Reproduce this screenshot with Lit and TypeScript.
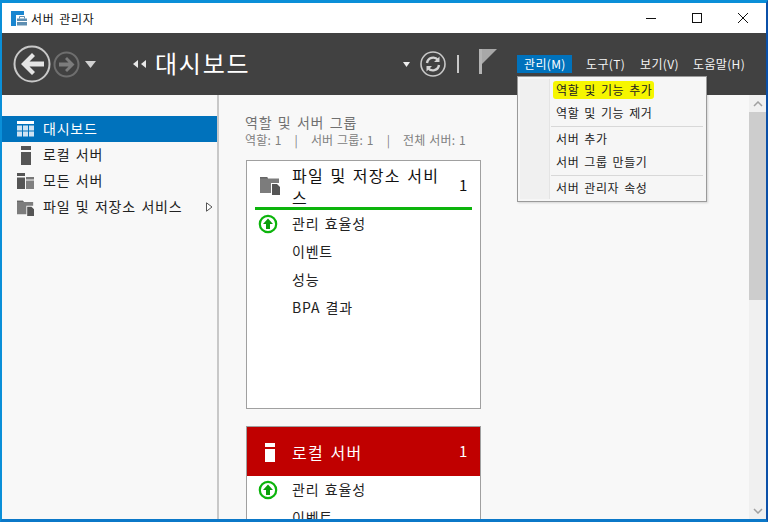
import { LitElement, html, css, svg } from "lit";
import { customElement } from "lit/decorators.js";

const serverIcon = (c: string) => svg`<svg width="10" height="19" viewBox="0 0 10 19"><rect x="0" y="0" width="10" height="4" fill="${c}"/><rect x="0" y="6" width="10" height="13" fill="${c}"/></svg>`;
const upIcon = html`<svg class="up" width="20" height="20" viewBox="0 0 20 20"><circle cx="10" cy="10" r="8.2" fill="#fff" stroke="#0cb40c" stroke-width="2.2"/><path d="M10 4.5 L15 10 H12 V15 H8 V10 H5 Z" fill="#0a9e0a"/></svg>`;
const folderIcon = (s: number) => html`<svg width="${s}" height="${s}" viewBox="0 0 20 20"><path d="M0 2 H7 L8 3.5 H19 V8 H11 V18 H0 Z" fill="#7c7c7c"/><path d="M0 2 H7 L8 3.5 H0 Z" fill="#666"/><path d="M12 9 H17 L20 12 V20 H12 Z" fill="#555"/></svg>`;

@customElement("app-root")
export class AppRoot extends LitElement {
  static styles = css`
    :host { display: block; width: 768px; height: 522px; overflow: hidden; box-sizing: border-box;
      font-family: "Noto Sans CJK KR", "Noto Sans", sans-serif; position: relative;
      border-top: 3px solid #0a8fd8; border-left: 2px solid #0a8fd8; border-right: 2px solid #0b50a8; border-bottom: 3px solid #0b78c8; background: #f8f8f8; }
    * { box-sizing: border-box; }
    .win { display: flex; flex-direction: column; height: 100%; }
    .title { height: 30px; flex: none; background: #fff; display: flex; align-items: center; padding-left: 9px; font-size: 12px; color: #111; gap: 4px; letter-spacing: .7px; word-spacing: 1.5px; }
    .title .caps { margin-left: auto; display: flex; }
    .cap { width: 46px; height: 30px; display: flex; align-items: center; justify-content: center; }
    .head { height: 62px; flex: none; background: #414141; display: flex; align-items: center; position: relative; color: #fff; }
    .nav { display: flex; align-items: center; padding-left: 11px; width: 131px; flex: none; }
    .crumb { display: flex; align-items: center; gap: 9px; flex: none; width: 270px; }
    .crumb span { font-size: 24px; line-height: 30px; color: #fff; margin-top: -3px; letter-spacing: 1.75px; }
    .tools { display: flex; align-items: center; flex: none; width: 114px; }
    .menus { display: flex; align-items: center; font-size: 12px; color: #f4f4f4; letter-spacing: .35px; }
    .menus div { height: 18px; line-height: 18px; padding: 0 7px; white-space: nowrap; margin-right: 0; }
    .menus .on { background: #0072bc; color: #fff; width: 55px; margin-right: 7px; }
    .menus .m2 { width: 54px; }
    .menus .m3 { width: 53px; }
    .body { flex: 1; display: flex; min-height: 0; background: #f8f8f8; }
    .side { width: 217px; flex: none; border-right: 2px solid #c8c8c8; padding-top: 21px; background: #f8f8f8; }
    .item { height: 26px; display: flex; align-items: center; font-size: 14px; letter-spacing: .8px; word-spacing: 1.5px; color: #222; position: relative; white-space: nowrap; }
    .item .lbl { margin-top: -2px; }
    .item .ic { width: 41px; display: flex; justify-content: center; padding-left: 6px; flex: none; }
    .item.sel { background: #0072bc; color: #fff; }
    .arrow { position: absolute; left: 204px; top: 8px; }
    .main { flex: 1; padding: 18px 0 0 26px; overflow: hidden; min-width: 0; }
    .h1 { font-size: 14px; line-height: 18px; color: #707070; letter-spacing: .8px; word-spacing: 1.5px; }
    .h2 { font-size: 12px; line-height: 16px; color: #808080; margin-top: 1px; display: flex; gap: 13px; letter-spacing: .15px; white-space: nowrap; word-spacing: 1px; }
    .card { width: 235px; border: 1px solid #a0a0a0; background: #fff; margin: 12px 0 0 1px; height: 249px; flex: none; }
    .card + .card { margin-top: 17px; height: 200px; }
    .chead { height: 49px; display: flex; position: relative; padding-left: 45px; font-size: 16px; line-height: 22px; color: #111; align-items: center; letter-spacing: 1.3px; word-spacing: 1.5px; }
    .chead .t { width: 156px; }
    .chead .n { position: absolute; left: 212px; top: 13px; font-size: 15px; line-height: 22px; }
    .chead .i { position: absolute; left: 13px; top: 14px; }
    .chead .line { position: absolute; left: 8px; right: 8px; bottom: 0; height: 3px; background: #0cb40c; }
    .chead.red { background: #c00000; color: #fff; }
    .chead.red .i { left: 18px; top: 16px; }
    .row { height: 28px; display: flex; align-items: center; font-size: 14px; letter-spacing: .8px; word-spacing: 1.5px; color: #222; padding-left: 45px; position: relative; }
    .row .lbl { margin-top: -2px; }
    .row .up { position: absolute; left: 11px; top: 4px; }
    .sb { width: 17px; flex: none; background: #f0f0f0; display: flex; flex-direction: column; }
    .sb .btn { height: 17px; display: flex; align-items: center; justify-content: center; flex: none; }
    .sb .thumb { height: 188px; background: #cdcdcd; flex: none; }
    .sb .rest { flex: 1; }
    .menu { position: absolute; left: 515px; top: 73px; width: 190px; height: 126px; background: #f6f6f6; border: 1px solid #9a9a9a; padding-top: 2px; font-size: 12px; color: #222; box-shadow: 1px 1px 2px rgba(0,0,0,.15); letter-spacing: .6px; word-spacing: 1.7px; }
    .menu::before { content: ""; position: absolute; left: 2px; top: 2px; bottom: 2px; width: 29px; background: #f0f0f0; border-right: 1px solid #e4e4e4; }
    .mi { position: relative; height: 22.5px; line-height: 22px; padding-left: 38px; white-space: nowrap; }
    .mi mark { display: inline-block; height: 18px; line-height: 18px; vertical-align: top; margin: 2px 0 0 -3px; background: #f6f600; color: #222; padding: 0 2px 0 3px; border-radius: 3px; }
    .sep { position: relative; height: 1px; background: #d8d8d8; margin: 2px 3px 1px 33px; }
  `;

  render() {
    return html`<div class="win">
      <div class="title">
        <svg width="16" height="15" viewBox="0 0 16 15"><rect x="0" y="0" width="5" height="15" fill="#1a86d0"/><rect x="0" y="0" width="13" height="4" fill="#1a86d0"/><rect x="6" y="7.5" width="10" height="7" fill="#5f8fb2"/><path d="M8.5 7.5 V5.5 H13.5 V7.5" fill="none" stroke="#5f8fb2"/><rect x="6" y="10" width="10" height="1" fill="#fff"/></svg>
        <span>서버 관리자</span>
        <div class="caps">
          <div class="cap"><svg width="12" height="12" viewBox="0 0 12 12"><path d="M1 6.5 H11" stroke="#111"/></svg></div>
          <div class="cap"><svg width="12" height="12" viewBox="0 0 12 12"><rect x="1.5" y="1.5" width="9" height="9" fill="none" stroke="#111"/></svg></div>
          <div class="cap"><svg width="12" height="12" viewBox="0 0 12 12"><path d="M1 1 L11 11 M11 1 L1 11" stroke="#111"/></svg></div>
        </div>
      </div>
      <div class="head">
        <div class="nav">
          <svg width="38" height="38" viewBox="0 0 38 38"><circle cx="19" cy="19" r="17.5" fill="none" stroke="#c8c8c8" stroke-width="2"/><path d="M19 8 L8 19 L19 30 L22 27 L16.5 21.5 H31 V16.5 H16.5 L22 11 Z" fill="#e4e4e4"/></svg>
          <svg style="margin-left:2px" width="27" height="27" viewBox="0 0 27 27"><circle cx="13.5" cy="13.5" r="12" fill="none" stroke="#6e6e6e" stroke-width="2"/><path d="M14 6 L21.5 13.5 L14 21 L12 19 L15.5 15.5 H6 V11.5 H15.5 L12 8 Z" fill="#7c7c7c"/></svg>
          <svg style="margin-left:5px" width="11" height="7" viewBox="0 0 11 7"><path d="M0 0 H11 L5.5 7 Z" fill="#d0d0d0"/></svg>
        </div>
        <div class="crumb">
          <svg width="13" height="8" viewBox="0 0 13 8"><path d="M5 0 V8 L0 4 Z M13 0 V8 L8 4 Z" fill="#e8e8e8"/></svg>
          <span>대시보드</span>
        </div>
        <div class="tools">
          <svg width="7" height="5" viewBox="0 0 7 5"><path d="M0 0 H7 L3.5 5 Z" fill="#eee"/></svg>
          <svg style="margin-left:10px" width="26" height="26" viewBox="0 0 26 26"><circle cx="13" cy="13" r="12" fill="none" stroke="#c8c8c8" stroke-width="1.6"/><path d="M7 12 A6.2 6.2 0 0 1 18 9 M19 14 A6.2 6.2 0 0 1 8 17" fill="none" stroke="#d4d4d4" stroke-width="2.4"/><path d="M19.5 5.5 V11 H14 Z M6.5 20.5 V15 H12 Z" fill="#d4d4d4"/></svg>
          <svg style="margin-left:11px" width="2" height="18" viewBox="0 0 2 18"><rect width="2" height="18" fill="#c8c8c8"/></svg>
          <svg style="margin-left:20px;margin-top:-6px" width="18" height="25" viewBox="0 0 18 25"><path d="M0 0 H3 V25 H0 Z" fill="#b4b4b4"/><path d="M3 0 H18 L3 15 Z" fill="#a8a8a8"/></svg>
        </div>
        <div class="menus">
          <div class="on">관리(M)</div><div class="m2">도구(T)</div><div class="m3">보기(V)</div><div>도움말(H)</div>
        </div>
      </div>
      <div class="body">
        <div class="side">
          <div class="item sel"><span class="ic"><svg width="17" height="16" viewBox="0 0 17 16"><rect width="17" height="3" fill="#fff"/><path d="M0 4.5 H5 V9.5 H0 Z M6 4.5 H11 V9.5 H6 Z M12 4.5 H17 V9.5 H12 Z M0 10.5 H5 V15.5 H0 Z M6 10.5 H11 V15.5 H6 Z M12 10.5 H17 V15.5 H12 Z" fill="#cfe3f2"/></svg></span><span class="lbl">대시보드</span></div>
          <div class="item"><span class="ic">${serverIcon("#555")}</span><span class="lbl">로컬 서버</span></div>
          <div class="item"><span class="ic"><svg width="17" height="16" viewBox="0 0 17 16"><rect width="8" height="3" fill="#555"/><rect y="4.5" width="8" height="11.5" fill="#555"/><rect x="9" y="4" width="8" height="2.5" fill="#777"/><rect x="9" y="7.5" width="8" height="8.5" fill="#808080"/></svg></span><span class="lbl">모든 서버</span></div>
          <div class="item"><span class="ic">${folderIcon(17)}</span><span class="lbl">파일 및 저장소 서비스</span><svg class="arrow" width="7" height="10" viewBox="0 0 7 10"><path d="M0.5 0.8 L6 5 L0.5 9.2 Z" fill="#fff" stroke="#555"/></svg></div>
        </div>
        <div class="main">
          <div class="h1">역할 및 서버 그룹</div>
          <div class="h2"><span>역할: 1</span><span>|</span><span>서버 그룹: 1</span><span>|</span><span>전체 서버: 1</span></div>
          <div class="card">
            <div class="chead"><span class="i">${folderIcon(20)}</span><span class="t">파일 및 저장소 서비스</span><span class="n">1</span><span class="line"></span></div>
            <div>
              <div class="row">${upIcon}<span class="lbl">관리 효율성</span></div><div class="row"><span class="lbl">이벤트</span></div><div class="row"><span class="lbl">성능</span></div><div class="row"><span class="lbl">BPA 결과</span></div>
            </div>
          </div>
          <div class="card">
            <div class="chead red"><span class="i">${serverIcon("#fff")}</span><span class="t">로컬 서버</span><span class="n">1</span></div>
            <div>
              <div class="row">${upIcon}<span class="lbl">관리 효율성</span></div><div class="row"><span class="lbl">이벤트</span></div>
            </div>
          </div>
        </div>
        <div class="sb">
          <div class="btn"><svg width="10" height="6" viewBox="0 0 10 6"><path d="M1 5 L5 1 L9 5" fill="none" stroke="#a0a0a0" stroke-width="1.5"/></svg></div>
          <div class="thumb"></div><div class="rest"></div>
          <div class="btn"><svg width="10" height="6" viewBox="0 0 10 6"><path d="M1 1 L5 5 L9 1" fill="none" stroke="#a0a0a0" stroke-width="1.5"/></svg></div>
        </div>
      </div>
      <div class="menu">
        <div class="mi"><mark>역할 및 기능 추가</mark></div>
        <div class="mi">역할 및 기능 제거</div>
        <div class="sep"></div>
        <div class="mi">서버 추가</div>
        <div class="mi">서버 그룹 만들기</div>
        <div class="sep"></div>
        <div class="mi">서버 관리자 속성</div>
      </div>
    </div>`;
  }
}
